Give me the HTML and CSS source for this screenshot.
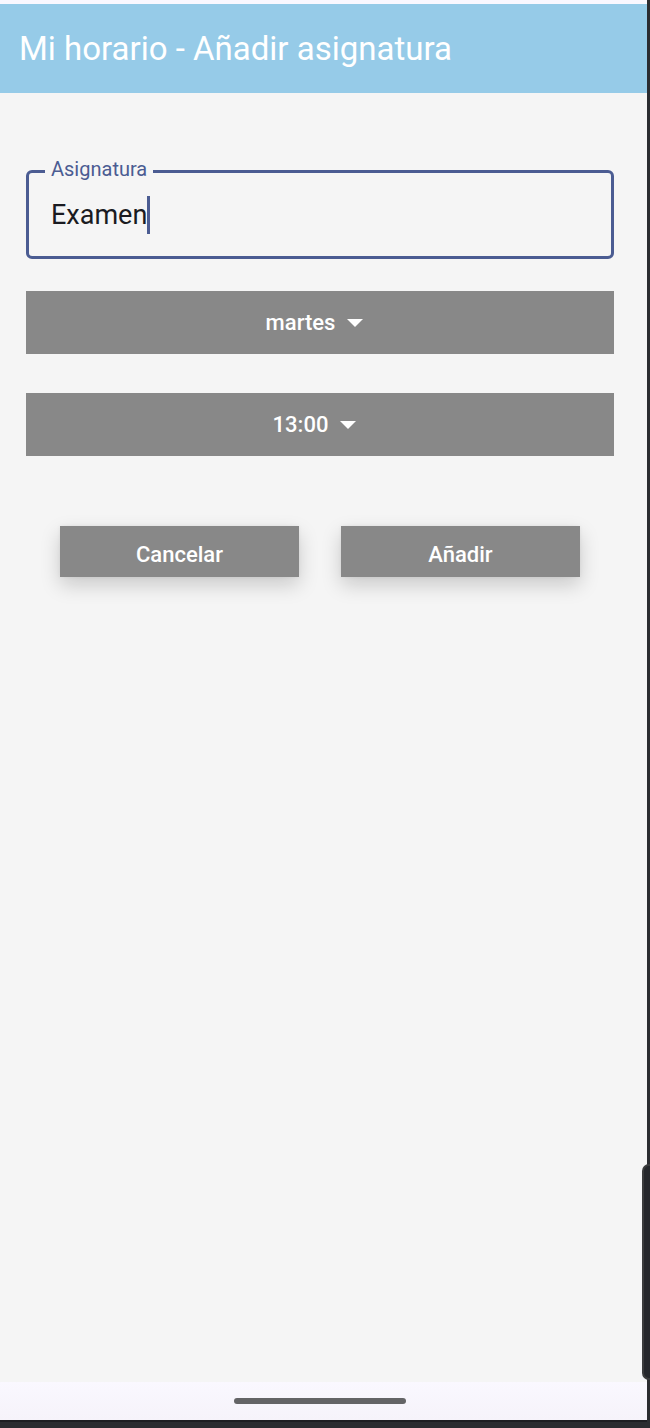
FILE: index.html
```html
<!DOCTYPE html>
<html lang="es">
<head>
<meta charset="utf-8">
<meta name="viewport" content="width=device-width, initial-scale=1">
<title>Mi horario - Añadir asignatura</title>
<link rel="stylesheet" href="styles.css">
</head>
<body>
<div class="device">
  <div class="screen">
    <header class="app-bar"><h1 class="app-title">Mi horario - Añadir asignatura</h1></header>
    <main class="content">
      <form class="form">
        <fieldset class="field">
          <legend class="field-legend"><label for="subject">Asignatura</label></legend>
          <div class="field-row">
            <input class="field-input" id="subject" type="text" value="Examen">
            <span class="caret"></span>
          </div>
        </fieldset>
        <div class="dropdown">
          <select class="dropdown-select" aria-label="Día">
            <option>martes</option>
          </select>
          <svg class="arrow" viewBox="0 0 16 8" aria-hidden="true"><path d="M0 0H16L8 8Z"/></svg>
        </div>
        <div class="dropdown">
          <select class="dropdown-select" aria-label="Hora">
            <option>13:00</option>
          </select>
          <svg class="arrow" viewBox="0 0 16 8" aria-hidden="true"><path d="M0 0H16L8 8Z"/></svg>
        </div>
        <div class="actions">
          <button class="action" type="button">Cancelar</button>
          <button class="action" type="submit">Añadir</button>
        </div>
      </form>
    </main>
    <footer class="nav-bar"><span class="nav-handle"></span></footer>
  </div>
  <div class="edge-panel"></div>
</div>
</body>
</html>
```
FILE: styles.css
```css
* {
  box-sizing: border-box;
}

body {
  margin: 0;
  font-family: Roboto, sans-serif;
  background: #2b2c30;
}

.device {
  position: relative;
  display: flex;
  min-height: 100vh;
  padding: 0 3px 8px 0;
  overflow: hidden;
}

.screen {
  flex: 1;
  display: flex;
  flex-direction: column;
  padding-top: 4px;
  background: #faf8ff;
  border-bottom: 2px solid #1e1e22;
  margin-bottom: -2px;
}

.app-bar {
  padding: 25px 19px 24px;
  background: #96cbe8;
}

.app-title {
  margin: 0;
  font-size: 33px;
  line-height: 40px;
  font-weight: 400;
  color: #fff;
}

.content {
  flex: 1;
  padding: 66px 33px 40px 26px;
  background: #f5f5f5;
}

.form {
  display: flex;
  flex-direction: column;
}

.field {
  min-width: 0;
  margin: 0 0 32px;
  padding: 0 22px 22px 16px;
  border: 3px solid #4b5c92;
  border-radius: 6px;
}

.field-legend {
  padding: 0 6px 4px;
  font-size: 20px;
  line-height: 20px;
  color: #4b5c92;
}

.field-row {
  display: flex;
  align-items: center;
  padding: 13px 0 0 6px;
}

.field-input {
  field-sizing: content;
  min-width: 0;
  padding: 0;
  border: 0;
  outline: 0;
  background: transparent;
  font: 400 27px/38px Roboto, sans-serif;
  color: #1a1b21;
}

.caret {
  width: 3px;
  height: 38px;
  background: #4b5c92;
}

.dropdown {
  display: flex;
  align-items: center;
  justify-content: center;
  gap: 12px;
  height: 63px;
  padding-right: 11px;
  margin-bottom: 39px;
  background: #888;
}

.dropdown-select {
  appearance: none;
  field-sizing: content;
  padding: 0;
  border: 0;
  background: transparent;
  font: 500 22px/32px Roboto, sans-serif;
  color: #fff;
}

.arrow {
  width: 16px;
  height: 8px;
  fill: #fff;
}

.actions {
  display: flex;
  gap: 42px;
  padding: 31px 34px 0;
}

.action {
  flex: 1;
  padding: 13px 0 6px;
  border: 0;
  background: #888;
  box-shadow: 0 8px 20px rgba(0, 0, 0, 0.18), 0 0 4px rgba(0, 0, 0, 0.06);
  font: 500 22px/32px Roboto, sans-serif;
  color: #fff;
}

.nav-bar {
  display: flex;
  justify-content: center;
  align-items: center;
  height: 38px;
  padding-right: 7px;
  background: linear-gradient(#faf8ff, #f6f3fa);
}

.nav-handle {
  width: 172px;
  height: 6px;
  border-radius: 3px;
  background: #646466;
}

.edge-panel {
  position: absolute;
  right: -8px;
  bottom: 48px;
  width: 16px;
  height: 216px;
  border: 2px solid #3b3c3d;
  border-radius: 7px;
  background: #25272b;
}
```
